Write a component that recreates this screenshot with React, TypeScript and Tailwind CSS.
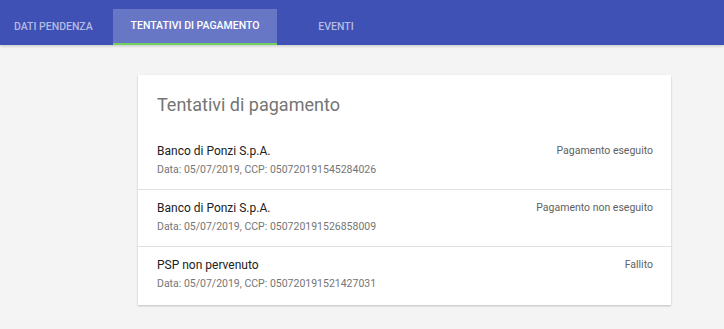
export default function App() {
  const rows = [
    { name: 'Banco di Ponzi S.p.A.', data: 'Data: 05/07/2019, CCP: 050720191545284026', stato: 'Pagamento eseguito' },
    { name: 'Banco di Ponzi S.p.A.', data: 'Data: 05/07/2019, CCP: 050720191526858009', stato: 'Pagamento non eseguito' },
    { name: 'PSP non pervenuto', data: 'Data: 05/07/2019, CCP: 050720191521427031', stato: 'Fallito' },
  ];

  return (
    <div className="min-h-[329px] bg-[#f4f4f4] font-['Roboto',sans-serif]">
      {/* Tabs */}
      <nav className="h-[45px] bg-[#3f51b5] flex items-end shadow-[0_1px_3px_rgba(0,0,0,0.2)] relative z-10">
        <div className="h-[36px] w-[113px] flex items-center pl-[14px] text-[10.5px] font-medium text-[#b4bbe3] uppercase">
          Dati pendenza
        </div>
        <div className="h-[36px] w-[164px] bg-[#6877c5] flex items-center justify-center text-[10.5px] font-medium text-white uppercase border-b-[2px] border-[#6fcf5f]">
          Tentativi di pagamento
        </div>
        <div className="h-[36px] w-[118px] flex items-center justify-center text-[10.5px] font-medium text-[#b4bbe3] uppercase">
          Eventi
        </div>
      </nav>

      <div className="pt-[30px] pl-[138px]">
        <div className="w-[533px] bg-white shadow-[0_1px_2px_rgba(0,0,0,0.22)]">
          <h2 className="h-[58px] pl-[19px] pt-[18px] text-[18px] text-[#757575] leading-[24px]">Tentativi di pagamento</h2>
          {rows.map((r, i) => (
            <div
              key={i}
              className={`flex justify-between pl-[19px] pr-[18px] pt-[9px] ${i < rows.length - 1 ? 'h-[57px] border-b border-[#e0e0e0]' : 'h-[58px]'}`}
            >
              <div>
                <div className="text-[12px] text-[#212121] leading-[18px]">{r.name}</div>
                <div className="text-[10.5px] text-[#757575] leading-[18px] mt-[1px]">{r.data}</div>
              </div>
              <div className="text-[10.5px] text-[#616161] leading-[18px]">{r.stato}</div>
            </div>
          ))}
        </div>
      </div>
    </div>
  );
}
